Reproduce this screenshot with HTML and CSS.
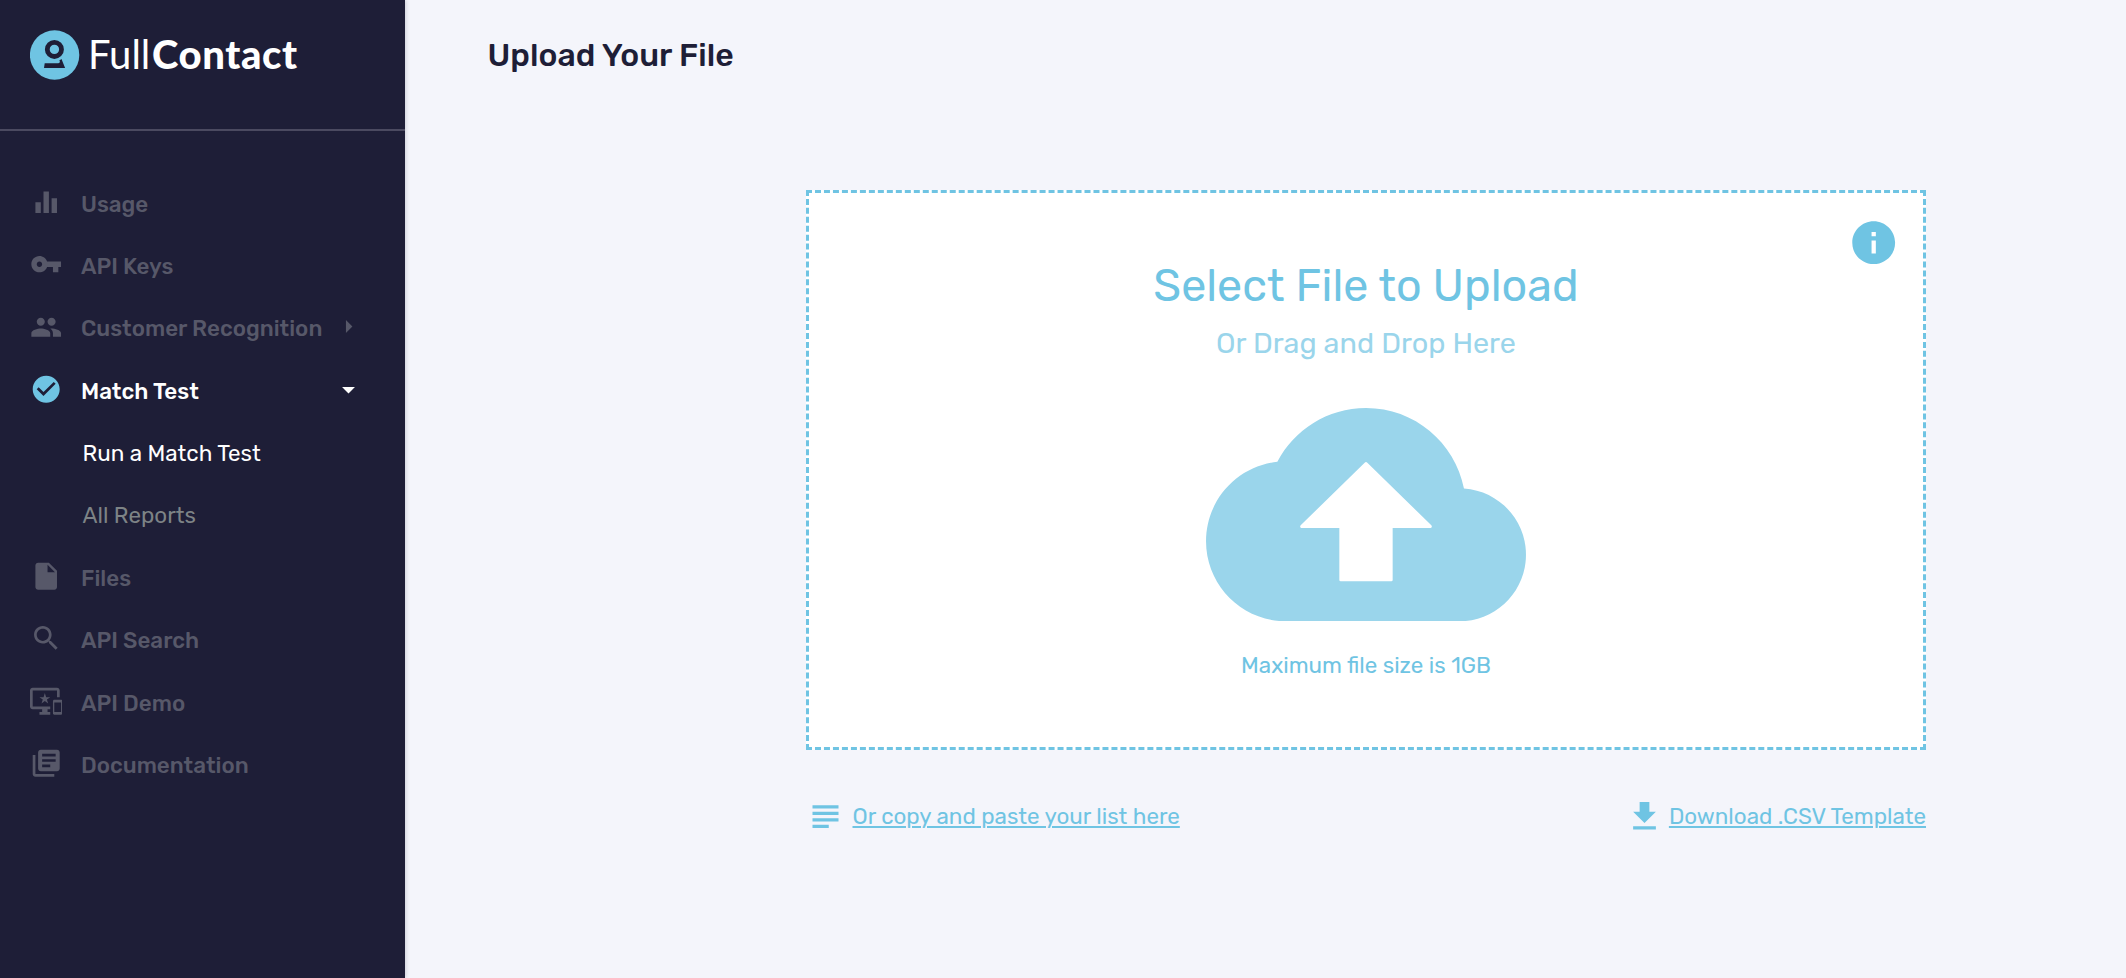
FILE: index.html
```html
<!DOCTYPE html>
<html lang="en">
<head>
    <meta charset="UTF-8">
    <meta name="viewport" content="width=device-width, initial-scale=1.0">
    <title>FullContact - Upload Your File</title>
    <link rel="stylesheet" href="styles.css">
</head>
<body>
    <aside class="sidebar">
        <div class="brand">
            <svg class="brand-mark" viewBox="0 0 50 50">
                <circle cx="24.6" cy="25" r="24.7" fill="#6fc4e3"/>
                <circle cx="24.4" cy="19.4" r="7.1" fill="none" stroke="#1e1e37" stroke-width="4.8"/>
                <path d="M14.7 33.2h13.6c1 0 1.5-.6 1.6-1.6l-.6-1 2.2-1.6 3.6 9.1H14z" fill="#1e1e37"/>
            </svg>
            <div class="brand-name"><span class="full">Full</span><span class="contact">Contact</span></div>
        </div>
        <nav class="menu">
            <a class="item">
                <svg class="icon" viewBox="0 0 24 24"><path d="M10 20h4V4h-4v16zm-6 0h4v-8H4v8zM16 9v11h4V9h-4z"/></svg>
                <span class="label">Usage</span>
            </a>
            <a class="item">
                <svg class="icon" viewBox="0 0 24 24"><path d="M12.65 10C11.83 7.67 9.61 6 7 6c-3.31 0-6 2.69-6 6s2.69 6 6 6c2.61 0 4.83-1.67 5.65-4H17v4h4v-4h2v-4H12.65zM7 14c-1.1 0-2-.9-2-2s.9-2 2-2 2 .9 2 2-.9 2-2 2z"/></svg>
                <span class="label">API Keys</span>
            </a>
            <a class="item">
                <svg class="icon" viewBox="0 0 24 24"><path d="M16 11c1.66 0 2.99-1.34 2.99-3S17.66 5 16 5c-1.66 0-3 1.34-3 3s1.34 3 3 3zm-8 0c1.66 0 2.99-1.34 2.99-3S9.66 5 8 5C6.34 5 5 6.34 5 8s1.34 3 3 3zm0 2c-2.33 0-7 1.17-7 3.5V19h14v-2.5c0-2.33-4.67-3.5-7-3.5zm8 0c-.29 0-.62.02-.97.05 1.16.84 1.97 1.97 1.97 3.45V19h6v-2.5c0-2.33-4.67-3.5-7-3.5z"/></svg>
                <span class="label">Customer Recognition</span>
                <svg class="arrow" viewBox="0 0 24 24"><path d="M10 17l5-5-5-5v10z"/></svg>
            </a>
            <a class="item active">
                <svg class="icon" viewBox="0 0 24 24"><path d="M12 2C6.48 2 2 6.48 2 12s4.48 10 10 10 10-4.48 10-10S17.52 2 12 2zm-2 15l-5-5 1.41-1.41L10 14.17l7.59-7.59L19 8l-9 9z"/></svg>
                <span class="label">Match Test</span>
                <svg class="arrow" viewBox="0 0 24 24"><path d="M7 10l5 5 5-5H7z"/></svg>
            </a>
            <a class="item sub current"><span class="label">Run a Match Test</span></a>
            <a class="item sub"><span class="label">All Reports</span></a>
            <a class="item">
                <svg class="icon" viewBox="0 0 24 24"><path d="M6 2c-1.1 0-2 .9-2 2v16c0 1.1.9 2 2 2h12c1.1 0 2-.9 2-2V8l-6-6H6zm7 7V3.5L18.5 9H13z"/></svg>
                <span class="label">Files</span>
            </a>
            <a class="item">
                <svg class="icon" viewBox="0 0 24 24"><path d="M15.5 14h-.79l-.28-.27C15.41 12.59 16 11.11 16 9.5 16 5.91 13.09 3 9.5 3S3 5.91 3 9.5 5.91 16 9.5 16c1.61 0 3.09-.59 4.23-1.57l.27.28v.79l5 4.99L20.49 19l-4.99-5zm-6 0C7.01 14 5 11.99 5 9.5S7.01 5 9.5 5 14 7.01 14 9.5 11.99 14 9.5 14z"/></svg>
                <span class="label">API Search</span>
            </a>
            <a class="item">
                <svg class="icon" viewBox="0 0 24 24"><path d="M23 11.01L18 11c-.55 0-1 .45-1 1v9c0 .55.45 1 1 1h5c.55 0 1-.45 1-1v-9c0-.55-.45-.99-1-.99zM23 20h-5v-7h5v7zM20 2H2C.89 2 0 2.89 0 4v12c0 1.1.89 2 2 2h7v2H7v2h8v-2h-2v-2h2v-2H2V4h18v5h2V4c0-1.11-.9-2-2-2zm-8.03 7L11 6l-.97 3H7l2.47 1.76-.94 2.91 2.47-1.8 2.47 1.8-.94-2.91L15 9h-3.03z"/></svg>
                <span class="label">API Demo</span>
            </a>
            <a class="item">
                <svg class="icon" viewBox="0 0 24 24"><path d="M4 6H2v14c0 1.1.9 2 2 2h14v-2H4V6zm16-4H8c-1.1 0-2 .9-2 2v12c0 1.1.9 2 2 2h12c1.1 0 2-.9 2-2V4c0-1.1-.9-2-2-2zm-1 9H9V9h10v2zm-4 4H9v-2h6v2zm4-8H9V5h10v2z"/></svg>
                <span class="label">Documentation</span>
            </a>
        </nav>
    </aside>
    <main class="content">
        <h1>Upload Your File</h1>
        <section class="upload">
            <div class="dropzone">
                <svg class="info" viewBox="0 0 24 24"><path d="M12 2C6.48 2 2 6.48 2 12s4.48 10 10 10 10-4.48 10-10S17.52 2 12 2zm1 15h-2v-6h2v6zm0-8h-2V7h2v2z"/></svg>
                <h2>Select File to Upload</h2>
                <p class="drag">Or Drag and Drop Here</p>
                <svg class="cloud" viewBox="0 4 24 16"><path d="M19.35 10.04C18.67 6.59 15.64 4 12 4 9.11 4 6.6 5.64 5.35 8.04 2.34 8.36 0 10.91 0 14c0 3.31 2.69 6 6 6h13c2.76 0 5-2.24 5-5 0-2.64-2.05-4.78-4.65-4.96zM14 13v3.9q0 .1-.1.1h-3.8q-.1 0-.1-.1V13H7.15q-.15-.05-.05-.2l4.8-4.7q.1-.1.2 0l4.8 4.7q.1.15-.05.2z"/></svg>
                <p class="limit">Maximum file size is 1GB</p>
            </div>
            <div class="links">
                <a class="link">
                    <svg viewBox="0 0 24 24"><path d="M14 17H4v2h10v-2zm6-8H4v2h16V9zM4 15h16v-2H4v2zM4 5v2h16V5H4z"/></svg>
                    <span>Or copy and paste your list here</span>
                </a>
                <a class="link download">
                    <svg viewBox="0 0 24 24"><path d="M19 9h-4V3H9v6H5l7 7 7-7zM5 18v2h14v-2H5z"/></svg>
                    <span>Download .CSV Template</span>
                </a>
            </div>
        </section>
    </main>
</body>
</html>
```
FILE: styles.css
```css
* {
    margin: 0;
    padding: 0;
    box-sizing: border-box;
}
body {
    display: flex;
    height: 978px;
    overflow: hidden;
    background: #f4f5fb;
    font-family: Rubik, Roboto, sans-serif;
    font-size: 22.4px;
    color: #1e1e37;
}
svg {
    display: block;
    flex: none;
    fill: currentColor;
}
.sidebar {
    width: 405px;
    flex: none;
    background: #1e1e37;
    box-shadow: 1px 0 4px rgba(30, 30, 55, 0.18);
}
.brand {
    display: flex;
    height: 131px;
    padding: 30px 0 0 30px;
    border-bottom: 2px solid #4b4a60;
}
.brand-mark {
    width: 50px;
    height: 50px;
}
.brand-name {
    display: flex;
    margin-left: 8px;
    font-family: Lato, sans-serif;
    font-size: 40px;
    line-height: 48px;
    color: #fff;
}
.full {
    width: 64px;
    font-weight: 400;
}
.contact {
    font-weight: 900;
    letter-spacing: 0.6px;
}
.menu {
    padding-top: 42.1px;
}
.item {
    display: flex;
    align-items: center;
    height: 62.35px;
    padding: 0 41.2px 0 29.8px;
    font-weight: 500;
    color: #575869;
}
.icon {
    width: 32.4px;
    height: 32.4px;
    margin: 0 18.8px 4px 0;
}
.arrow {
    width: 31px;
    height: 31px;
    margin: 0 0 4px auto;
}
.active {
    color: #fff;
}
.active .icon {
    color: #6fc4e3;
}
.sub {
    padding-left: 82.5px;
    font-weight: 400;
    color: #7d8386;
}
.current {
    color: #fff;
}
.content {
    flex: 1;
    padding: 36px 200px 0 82.5px;
}
h1 {
    font-size: 32px;
    line-height: 38px;
    font-weight: 500;
}
.upload {
    width: 1120px;
    margin: 116px 0 0 auto;
}
.dropzone {
    position: relative;
    display: flex;
    flex-direction: column;
    align-items: center;
    height: 560px;
    padding-top: 66px;
    border: 3px dashed #6fc4e3;
    background: #fff;
    color: #6fc4e3;
}
.info {
    position: absolute;
    top: 23.6px;
    right: 24px;
    width: 51.4px;
    height: 51.4px;
}
h2 {
    font-size: 44.8px;
    line-height: 54px;
    font-weight: 400;
}
.drag {
    margin-top: 13px;
    font-size: 28.8px;
    line-height: 34px;
    color: #9ad5eb;
}
.cloud {
    width: 320px;
    height: 213.3px;
    margin-top: 47.8px;
    color: #9ad5eb;
}
.limit {
    margin-top: 31.9px;
    line-height: 26px;
}
.links {
    display: flex;
    justify-content: space-between;
    margin-top: 47px;
    color: #6fc4e3;
}
.link {
    display: flex;
    align-items: center;
}
.link svg {
    width: 39px;
    height: 39px;
    margin-right: 7.5px;
}
.download svg {
    margin-right: 5px;
}
.link span {
    text-decoration: underline;
    text-decoration-thickness: 2px;
    text-underline-offset: 2px;
}
```
